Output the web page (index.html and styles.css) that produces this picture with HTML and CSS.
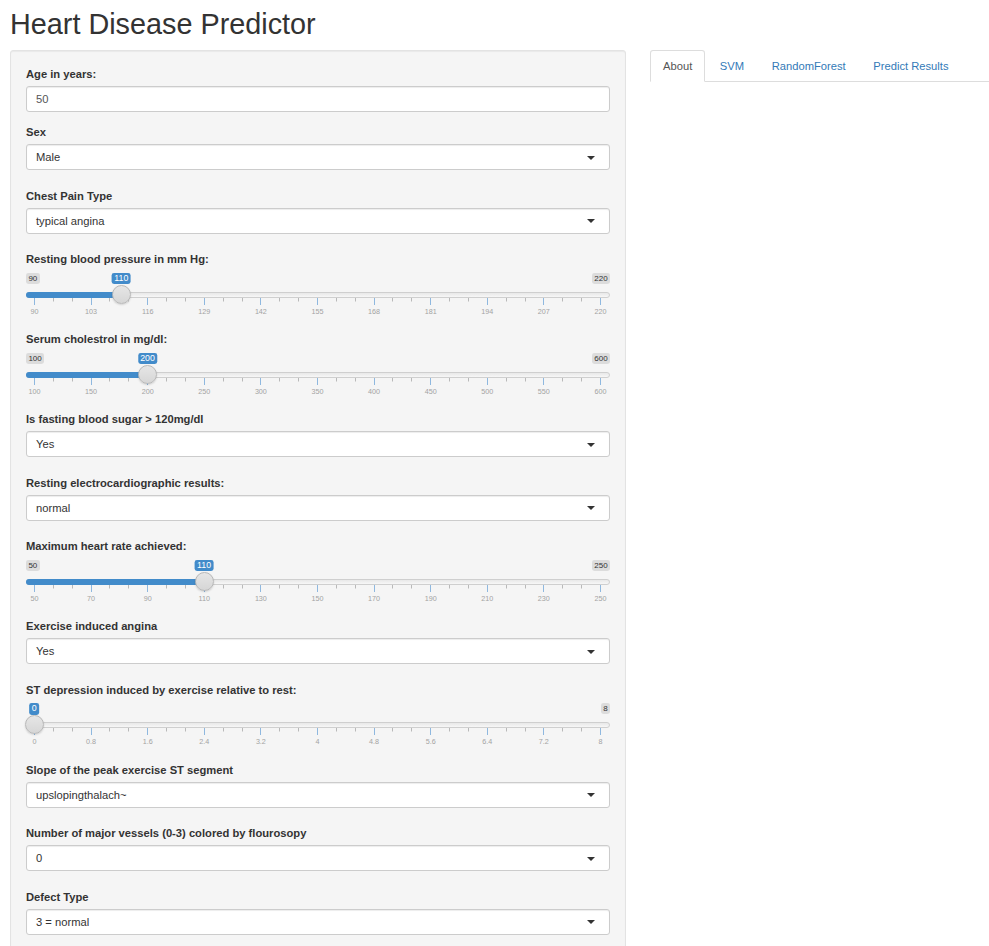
FILE: index.html
```html
<!DOCTYPE html>
<html lang="en">
<head>
<meta charset="utf-8">
<title>Heart Disease Predictor</title>
<link rel="stylesheet" href="styles.css">
</head>
<body>
<h1 class="title">Heart Disease Predictor</h1>
<div class="layout">
  <div class="well">
    <div class="group group-input">
      <label class="lbl">Age in years:</label>
      <div class="field">50</div>
    </div>
    <div class="group group-select">
      <label class="lbl">Sex</label>
      <div class="field select"><span>Male</span><i class="caret"></i></div>
    </div>
    <div class="group group-select">
      <label class="lbl">Chest Pain Type</label>
      <div class="field select"><span>typical angina</span><i class="caret"></i></div>
    </div>
    <div class="group group-slider">
      <label class="lbl">Resting blood pressure in mm Hg:</label>
      <div class="irs" style="--f:0.15385">
        <span class="irs-min">90</span><span class="irs-max">220</span>
        <div class="irs-line"></div>
        <div class="irs-bar"></div>
        <div class="irs-grid"></div>
        <div class="irs-labels"><span>90</span><span>103</span><span>116</span><span>129</span><span>142</span><span>155</span><span>168</span><span>181</span><span>194</span><span>207</span><span>220</span></div>
        <div class="irs-handle"></div>
        <span class="irs-single">110</span>
      </div>
    </div>
    <div class="group group-slider">
      <label class="lbl">Serum cholestrol in mg/dl:</label>
      <div class="irs" style="--f:0.2">
        <span class="irs-min">100</span><span class="irs-max">600</span>
        <div class="irs-line"></div>
        <div class="irs-bar"></div>
        <div class="irs-grid"></div>
        <div class="irs-labels"><span>100</span><span>150</span><span>200</span><span>250</span><span>300</span><span>350</span><span>400</span><span>450</span><span>500</span><span>550</span><span>600</span></div>
        <div class="irs-handle"></div>
        <span class="irs-single">200</span>
      </div>
    </div>
    <div class="group group-select">
      <label class="lbl">Is fasting blood sugar &gt; 120mg/dl</label>
      <div class="field select"><span>Yes</span><i class="caret"></i></div>
    </div>
    <div class="group group-select">
      <label class="lbl">Resting electrocardiographic results:</label>
      <div class="field select"><span>normal</span><i class="caret"></i></div>
    </div>
    <div class="group group-slider">
      <label class="lbl">Maximum heart rate achieved:</label>
      <div class="irs" style="--f:0.3">
        <span class="irs-min">50</span><span class="irs-max">250</span>
        <div class="irs-line"></div>
        <div class="irs-bar"></div>
        <div class="irs-grid"></div>
        <div class="irs-labels"><span>50</span><span>70</span><span>90</span><span>110</span><span>130</span><span>150</span><span>170</span><span>190</span><span>210</span><span>230</span><span>250</span></div>
        <div class="irs-handle"></div>
        <span class="irs-single">110</span>
      </div>
    </div>
    <div class="group group-select">
      <label class="lbl">Exercise induced angina</label>
      <div class="field select"><span>Yes</span><i class="caret"></i></div>
    </div>
    <div class="group group-slider">
      <label class="lbl">ST depression induced by exercise relative to rest:</label>
      <div class="irs" style="--f:0">
        <span class="irs-max">8</span>
        <div class="irs-line"></div>
        <div class="irs-bar"></div>
        <div class="irs-grid"></div>
        <div class="irs-labels"><span>0</span><span>0.8</span><span>1.6</span><span>2.4</span><span>3.2</span><span>4</span><span>4.8</span><span>5.6</span><span>6.4</span><span>7.2</span><span>8</span></div>
        <div class="irs-handle"></div>
        <span class="irs-single">0</span>
      </div>
    </div>
    <div class="group group-select">
      <label class="lbl">Slope of the peak exercise ST segment</label>
      <div class="field select"><span>upslopingthalach~</span><i class="caret"></i></div>
    </div>
    <div class="group group-select">
      <label class="lbl">Number of major vessels (0-3) colored by flourosopy</label>
      <div class="field select"><span>0</span><i class="caret"></i></div>
    </div>
    <div class="group group-select">
      <label class="lbl">Defect Type</label>
      <div class="field select"><span>3 = normal</span><i class="caret"></i></div>
    </div>
  </div>
  <div class="main">
    <ul class="tabs">
      <li class="tab active"><a>About</a></li>
      <li class="tab"><a>SVM</a></li>
      <li class="tab"><a>RandomForest</a></li>
      <li class="tab"><a>Predict Results</a></li>
    </ul>
  </div>
</div>
</body>
</html>
```
FILE: styles.css
```css
html { overflow: hidden; }
body {
  margin: 0;
  padding: 0 0 0 10px;
  background: #fff;
  color: #333;
  font-family: "Liberation Sans", Arial, Helvetica, sans-serif;
  font-size: 11.2px;
  line-height: 16px;
}
.title {
  margin: 9px 0 9px 0;
  font-size: 28.8px;
  line-height: 31.7px;
  font-weight: normal;
  color: #333;
}
.layout {
  display: flex;
  gap: 24px;
  align-items: flex-start;
}
.well {
  flex: none;
  width: 584px;
  padding: 15px 15px 20px 15px;
  background: #f5f5f5;
  border: 1px solid #e3e3e3;
  border-radius: 3px;
  box-shadow: inset 0 1px 1px rgba(0,0,0,0.05);
}
.main { flex: 1; }
.group { display: flex; flex-direction: column; }
.lbl {
  display: block;
  font-weight: bold;
  line-height: 16px;
  margin-bottom: 4px;
}
.group-input { margin-bottom: 12.5px; }
.group-select { margin-bottom: 17.5px; }
.group-slider { margin-bottom: 12px; }
.field {
  box-sizing: border-box;
  height: 26px;
  border: 1px solid #ccc;
  border-radius: 3px;
  background: #fff;
  padding: 0 14px 0 9px;
  display: flex;
  align-items: center;
  color: #555;
  box-shadow: inset 0 1px 1px rgba(0,0,0,0.075);
}
.select { justify-content: space-between; color: #333; }
.caret {
  width: 0; height: 0;
  border-top: 4.5px solid #333;
  border-left: 4px solid transparent;
  border-right: 4px solid transparent;
  margin-top: 1px;
}
/* slider */
.irs {
  position: relative;
  height: 48px;
}
.irs-min, .irs-max {
  position: absolute;
  top: 1.5px;
  font-size: 8px;
  line-height: 9px;
  padding: 1px 2.4px;
  background: rgba(0,0,0,0.1);
  border-radius: 2.4px;
  color: #333;
}
.irs-min { left: 0; }
.irs-max { right: 0; }
.irs-line {
  position: absolute;
  left: 0; right: 0;
  top: 20.5px;
  height: 6px;
  box-sizing: border-box;
  border: 1px solid #cfcfcf;
  border-radius: 4px;
  background: linear-gradient(#e8e8e8, #f7f7f7);
}
.irs-bar {
  position: absolute;
  left: 0;
  top: 20.5px;
  height: 6px;
  width: calc(8.3px + var(--f) * 566px);
  background: #428bca;
  border-radius: 4px 0 0 4px;
}
.irs-grid {
  position: absolute;
  left: 8px;
  width: 567px;
  top: 26.5px;
  height: 7px;
  background:
    repeating-linear-gradient(90deg, #8fb8df 0 1px, transparent 1px 56.6px) 0 0 / 100% 7px no-repeat,
    repeating-linear-gradient(90deg, #b9b9b9 0 1px, transparent 1px 18.8667px) 0 0 / 100% 3.5px no-repeat;
}
.irs-labels {
  position: absolute;
  left: 8px;
  width: 567px;
  top: 35.5px;
  display: flex;
  justify-content: space-between;
  font-size: 7.2px;
  line-height: 9px;
  color: #a3a3a3;
}
.irs-labels span {
  width: 1px;
  display: flex;
  justify-content: center;
  white-space: nowrap;
}
.irs-handle {
  position: absolute;
  top: 13.5px;
  left: calc(8.3px + var(--f) * 566px - 9.5px);
  width: 17px;
  height: 17px;
  border-radius: 50%;
  border: 1px solid #b8b8b8;
  background: linear-gradient(#e6e6e6, #d6d6d6);
  box-shadow: 0 1px 2px rgba(0,0,0,0.15);
}
.irs-single {
  position: absolute;
  top: 1.5px;
  left: calc(8.3px + var(--f) * 566px);
  transform: translateX(-50%);
  font-size: 8.8px;
  line-height: 9.5px;
  padding: 1px 2.4px;
  background: #428bca;
  color: #fff;
  border-radius: 2.4px;
  white-space: nowrap;
}
/* tabs */
.tabs {
  list-style: none;
  margin: 0;
  padding: 0;
  display: flex;
  border-bottom: 1px solid #ddd;
}
.tab {
  margin-bottom: -1px;
  margin-right: 1.6px;
}
.tab a {
  display: block;
  padding: 7.5px 12px 7px;
  line-height: 16px;
  border: 1px solid transparent;
  border-radius: 3.2px 3.2px 0 0;
  color: #337ab7;
}
.tab.active a {
  color: #555;
  background: #fff;
  border-color: #ddd #ddd transparent;
}
```
